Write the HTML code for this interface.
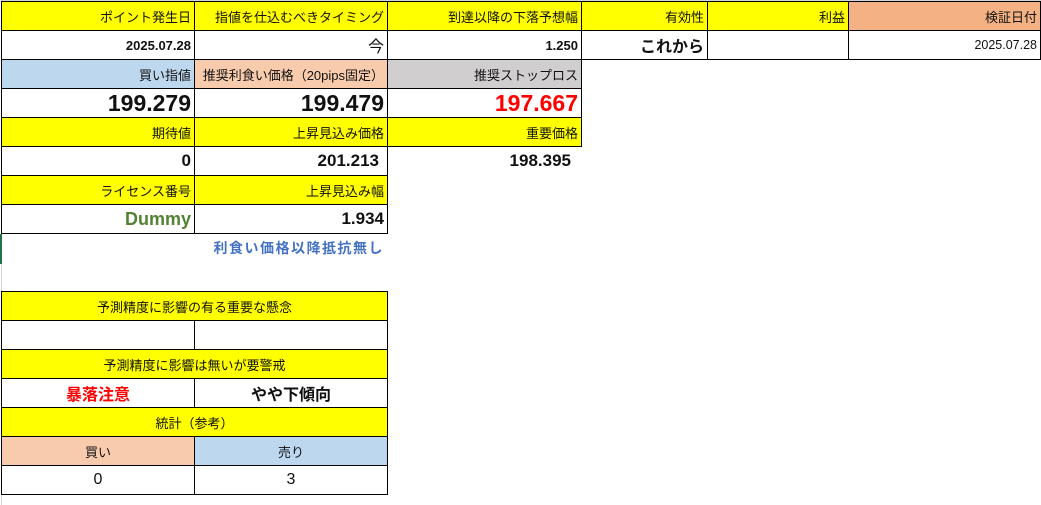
<!DOCTYPE html>
<html><head><meta charset="utf-8"><style>
body{margin:0;width:1041px;height:505px;background:#fff;position:relative;overflow:hidden;font-family:"Liberation Sans","Noto Sans CJK JP",sans-serif;color:#111}
.c{position:absolute;border:1px solid #000;box-sizing:border-box;display:flex;align-items:center;justify-content:flex-end;padding-right:3px;font-size:13px;white-space:nowrap}
.y{background:#ffff00}.o{background:#f4b183}.b{background:#bdd7ee}.p{background:#f8cbad}.g{background:#d0cece}
.ctr{justify-content:center;padding-right:0}
.bd{font-weight:bold;font-size:13px}
.big{font-weight:bold;font-size:23px}
.mid{font-weight:bold;font-size:17px}
</style></head><body>
<div style="position:absolute;left:0;top:0;width:1041px;height:1px;background:#d4d4d4"></div>
<div style="position:absolute;left:1px;top:234px;width:1px;height:271px;background:#d4d4d4"></div>
<div style="position:absolute;left:0;top:234px;width:2px;height:30px;background:#217346"></div>
<div class="c y" style="left:1px;top:1px;width:194px;height:30px">ポイント発生日</div>
<div class="c y" style="left:194px;top:1px;width:194px;height:30px">指値を仕込むべきタイミング</div>
<div class="c y" style="left:387px;top:1px;width:195px;height:30px">到達以降の下落予想幅</div>
<div class="c y" style="left:581px;top:1px;width:127px;height:30px">有効性</div>
<div class="c y" style="left:707px;top:1px;width:142px;height:30px">利益</div>
<div class="c o" style="left:848px;top:1px;width:193px;height:30px">検証日付</div>
<div class="c bd" style="left:1px;top:30px;width:194px;height:30px">2025.07.28</div>
<div class="c" style="left:194px;top:30px;width:194px;height:30px;font-size:16px">今</div>
<div class="c bd" style="left:387px;top:30px;width:195px;height:30px">1.250</div>
<div class="c" style="left:581px;top:30px;width:127px;height:30px;font-size:16px;font-weight:bold">これから</div>
<div class="c" style="left:707px;top:30px;width:142px;height:30px"></div>
<div class="c" style="left:848px;top:30px;width:193px;height:30px;font-size:12.5px">2025.07.28</div>
<div class="c b" style="left:1px;top:59px;width:194px;height:30px">買い指値</div>
<div class="c p" style="left:194px;top:59px;width:194px;height:30px">推奨利食い価格（20pips固定）</div>
<div class="c g" style="left:387px;top:59px;width:195px;height:30px">推奨ストップロス</div>
<div class="c big" style="left:1px;top:88px;width:194px;height:30px">199.279</div>
<div class="c big" style="left:194px;top:88px;width:194px;height:30px">199.479</div>
<div class="c big" style="left:387px;top:88px;width:195px;height:30px;color:#ff0000">197.667</div>
<div class="c y" style="left:1px;top:117px;width:194px;height:30px">期待値</div>
<div class="c y" style="left:194px;top:117px;width:194px;height:30px">上昇見込み価格</div>
<div class="c y" style="left:387px;top:117px;width:195px;height:30px">重要価格</div>
<div class="c mid" style="left:1px;top:146px;width:194px;height:30px">0</div>
<div class="c mid" style="left:194px;top:146px;width:194px;height:30px;padding-right:8px">201.213</div>
<div class="c mid" style="left:387px;top:146px;width:195px;height:30px;border:none;padding-right:11px">198.395</div>
<div class="c y" style="left:1px;top:175px;width:194px;height:30px">ライセンス番号</div>
<div class="c y" style="left:194px;top:175px;width:194px;height:30px">上昇見込み幅</div>
<div class="c" style="left:1px;top:204px;width:194px;height:30px;font-weight:bold;font-size:18px;color:#548235">Dummy</div>
<div class="c mid" style="left:194px;top:204px;width:194px;height:30px">1.934</div>
<div style="position:absolute;left:190px;top:238px;width:194px;text-align:right;color:#4472c4;font-weight:bold;font-size:14px;letter-spacing:1.5px">利食い価格以降抵抗無し</div>
<div class="c y ctr" style="left:1px;top:291px;width:387px;height:30px">予測精度に影響の有る重要な懸念</div>
<div class="c" style="left:1px;top:320px;width:194px;height:30px"></div>
<div class="c" style="left:194px;top:320px;width:194px;height:30px"></div>
<div class="c y ctr" style="left:1px;top:349px;width:387px;height:30px">予測精度に影響は無いが要警戒</div>
<div class="c ctr" style="left:1px;top:378px;width:194px;height:30px;color:#ff0000;font-weight:bold;font-size:16px">暴落注意</div>
<div class="c ctr" style="left:194px;top:378px;width:194px;height:30px;font-weight:bold;font-size:16px">やや下傾向</div>
<div class="c y ctr" style="left:1px;top:407px;width:387px;height:30px">統計（参考）</div>
<div class="c p ctr" style="left:1px;top:436px;width:194px;height:30px">買い</div>
<div class="c b ctr" style="left:194px;top:436px;width:194px;height:30px">売り</div>
<div class="c ctr" style="left:1px;top:465px;width:194px;height:30px;font-size:16px">0</div>
<div class="c ctr" style="left:194px;top:465px;width:194px;height:30px;font-size:16px">3</div>
</body></html>
